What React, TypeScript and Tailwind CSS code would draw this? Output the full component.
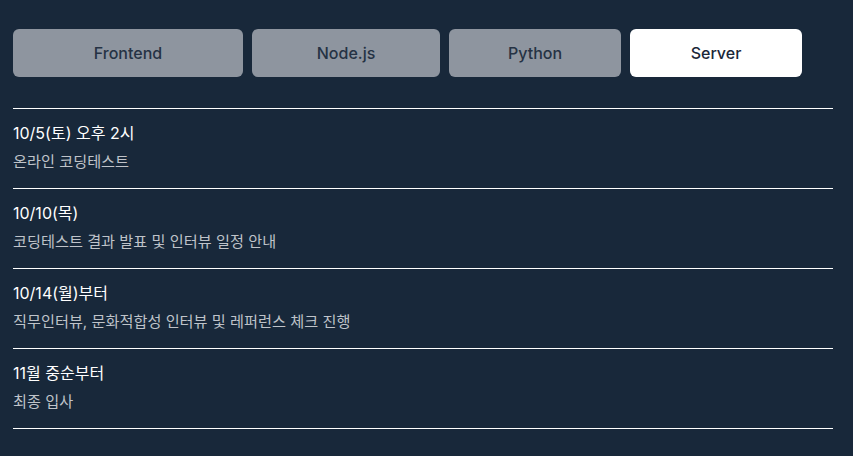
import { useState } from 'react';

const tabs = [
  { label: 'Frontend', w: 'w-[230px]' },
  { label: 'Node.js', w: 'w-[188px]' },
  { label: 'Python', w: 'w-[172px]' },
  { label: 'Server', w: 'w-[172px]' },
];

const schedule = [
  { date: '10/5(토) 오후 2시', desc: '온라인 코딩테스트' },
  { date: '10/10(목)', desc: '코딩테스트 결과 발표 및 인터뷰 일정 안내' },
  { date: '10/14(월)부터', desc: '직무인터뷰, 문화적합성 인터뷰 및 레퍼런스 체크 진행' },
  { date: '11월 중순부터', desc: '최종 입사' },
];

export default function App() {
  const [active, setActive] = useState('Server');

  return (
    <div
      className="min-h-screen bg-[#18283a] px-[13px] pt-[29px]"
      style={{ fontFamily: 'Inter, "Noto Sans CJK KR", sans-serif' }}
    >
      <div className="flex gap-[9px]">
        {tabs.map((tab) => (
          <button
            key={tab.label}
            onClick={() => setActive(tab.label)}
            className={`${tab.w} h-[48px] rounded-md text-[16px] font-medium ${
              active === tab.label ? 'bg-white text-[#1b2738]' : 'bg-[#8e959f] text-[#253244]'
            }`}
          >
            {tab.label}
          </button>
        ))}
      </div>

      <ul className="mt-[31px] w-[820px] border-t border-white">
        {schedule.map((item) => (
          <li key={item.date} className="h-[80px] border-b border-white pt-[12px]">
            <div className="text-[16px] font-normal leading-[24px] text-white">{item.date}</div>
            <div className="mt-[6px] text-[15.2px] leading-[22px] text-[#bfc3c9]">{item.desc}</div>
          </li>
        ))}
      </ul>
    </div>
  );
}
